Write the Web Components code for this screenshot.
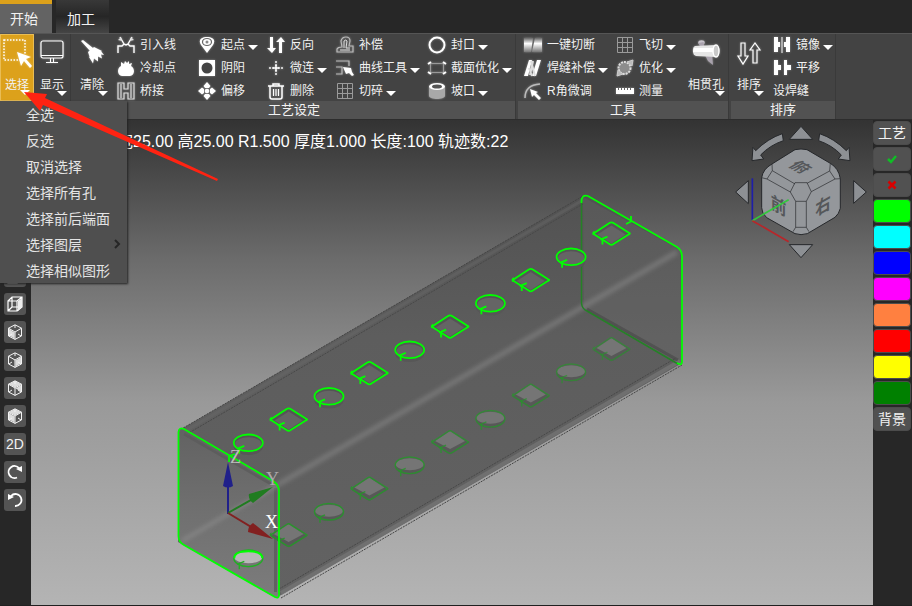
<!DOCTYPE html>
<html lang="zh-CN">
<head>
<meta charset="utf-8">
<title>三维管材切割</title>
<style>
html,body{margin:0;height:100%;background:#272727}
body{font-family:"Liberation Sans","Noto Sans CJK SC",sans-serif;color:#f2f2f2;overflow:hidden}
</style>
</head>
<body>
<cad-app></cad-app>
<script>
const ICONS = {
  select:[30,`<rect x="2" y="2" width="21" height="20" fill="none" stroke="#fff" stroke-width="1.5" stroke-dasharray="1.500 1.500"/><path d="M15 14l14 5-5 2 6 7-2 2-6-7-3 5z" fill="#fff"/>`],
  screen:[30,`<rect x="4" y="3" width="22" height="17" rx="2" fill="#4d4d4d" stroke="#fff" stroke-width="1.2"/><path d="M4 17.500h22M13.500 20v4M16.500 20v4M9 24.500h12" stroke="#fff" fill="none"/>`],
  broom:[30,`<path d="M4 3l2-1 10 8-3 3zM11 14l6-5 8 4-12 7zM12 19l11-7 4 5-3-.5 1 4-4-2v5l-4-3-1 5z" fill="#fff"/>`],
  pipe:[30,`<ellipse cx="10.500" cy="4.500" rx="3.200" ry="2.200" fill="#c9c4cc"/><path d="M7.500 5l3 7 3-2-1-6zM14 17l3 6 5 4-1-11z" fill="#a9a2ad"/><path d="M4 8l21-1v12l-20-1c-4-1-4-9-1-10z" fill="#e6e6e6"/><path d="M3 10h20v4H2z" fill="#fff"/><ellipse cx="25" cy="13" rx="3" ry="6" fill="#c8c8c8" stroke="#fff" stroke-width="1.500"/>`],
  sort:[30,`<path d="M7 5h4v13h3l-5 8-5-8h3zM19 25h4V12h3l-5-7-5 7h3z" fill="none" stroke="#fff" stroke-width="1.200"/>`],
  lead:[18,`<path d="M1 17V10h4l2-2 2 1 2-1 2 2h4v7M3 1l4 7M15 1l-4 7" fill="none" stroke="#fff" stroke-width="1.400"/><path d="M1 4l4 1-1-4zM17 4l-4 1 1-4z" fill="#ddd"/>`],
  cool:[18,`<path d="M4 3l3 2 1-3 2 2 2-2 0 3 3-1-1 3c5 3 3 10-1 10H5C1 17-1 10 4 7z" fill="#fff"/>`],
  bridge:[18,`<path d="M1 1h6v6h4V1h6v16h-6v-6H7v6H1zM4 2v14M14 2v14" fill="none" stroke="#ddd" stroke-width="1.200"/>`],
  pin:[18,`<path d="M9 17L3 9C0 4 3 1 9 1s9 3 6 8z" fill="#fff"/><ellipse cx="9" cy="6" rx="4.500" ry="3.500" fill="none" stroke="#666" stroke-width="1.200"/><circle cx="9" cy="6" r="1.500" fill="#888"/>`],
  yin:[18,`<path d="M1 1h16v16H1z" fill="#fff"/><circle cx="9" cy="9" r="5.500" fill="#444"/>`],
  move:[18,`<circle cx="9" cy="9" r="2.300" fill="#fff"/><path d="M9 0l3.500 4-1.500 2H7L5.500 4zM9 18l3.500-4-1.500-2H7l-1.500 2zM0 9l4-3.500L6 7v4l-2 1.500zM18 9l-4-3.500L12 7v4l2 1.500z" fill="#fff"/>`],
  reverse:[18,`<path d="M3 1h3v11h3l-4 5-5-5h3zM12 17h3V6h3l-4-5-5 5h3z" fill="#fff"/>`],
  micro:[18,`<path d="M9 2v14M2 9h14" stroke="#ccc" stroke-width="2" stroke-dasharray="2 1"/><path d="M9 6v6M6 9h6" stroke="#fff" stroke-width="1.500"/>`],
  trash:[18,`<path d="M1 4h16M6 4V2h6v2M3 4v11q0 2 2 2h8q2 0 2-2V4" fill="none" stroke="#fff" stroke-width="1.500"/><path d="M6.500 7v7M9 7v7M11.500 7v7" stroke="#fff" stroke-width="1.200"/>`],
  comp:[18,`<path d="M1 16V13q1-2 5-2L5 5q1-4 5-4t4 4l-1 5h4v6z" fill="none" stroke="#bbb" stroke-width="1.200"/><path d="M4 14h10M8 12V5q2-2 3 0l-1 7h4" fill="none" stroke="#ddd" stroke-width="1"/>`],
  curve:[18,`<path d="M0 2h13v5M0 8h6v7H0" fill="none" stroke="#bbb" stroke-width="1.200"/><path d="M7 8l8 1 1 4 2 3-2 1-3-3-3 1z" fill="#fff"/>`],
  grid:[18,`<path d="M1.500 1.500h15v15h-15zM6.500 1v16M11.500 1v16M1 6.500h16M1 11.500h16" fill="none" stroke="#9a9a9a"/>`],
  cap:[18,`<circle cx="9" cy="9" r="7.500" fill="none" stroke="#fff" stroke-width="2"/>`],
  cross:[20,`<path d="M2 5.500h16M2 14.500h16M3.500 5v10M16.500 5v10" stroke="#999" fill="none"/><path d="M1 6l3-2M1 14l3 2M16 4l3 2M16 16l3-2" stroke="#fff" fill="none" stroke-width="2"/>`],
  groove:[18,`<path d="M1 4h16v10c-1 4-15 4-16 0z" fill="#a8a8a8"/><ellipse cx="9" cy="4.500" rx="8" ry="3.500" fill="#fff"/><ellipse cx="9" cy="4.500" rx="5" ry="2" fill="#555"/>`],
  cut:[18,`<path d="M0 2h9L7 16H0z" fill="url(#s)"/><path d="M11 2h7v14H8z" fill="url(#s)"/><defs><linearGradient id="s" x2="0" y2="1"><stop stop-color="#666"/><stop offset=".4" stop-color="#fff"/><stop offset="1" stop-color="#777"/></linearGradient></defs>`],
  weld:[18,`<path d="M5 1h3L4 17H0zM13 1h4L12 17H8z" fill="#fff"/><path d="M7 2l4 15M5 9l3 8M9 2l-3 14" stroke="#ddd" stroke-width="2"/>`],
  corner:[18,`<path d="M1 16Q1 3 16 2" fill="none" stroke="#bbb" stroke-width="1.500"/><path d="M6 7l8 3-2 1 5 5-2 2-5-5-2 2z" fill="#fff"/>`],
  opt:[18,`<circle cx="8.500" cy="9" r="6" fill="#8c8c8c" stroke="#ddd" stroke-width="2" stroke-dasharray="2 1"/><path d="M17 1l-1 6-5-4zM1 17l1-6 5 4z" fill="#bbb" stroke="#ccc"/>`],
  ruler:[20,`<path d="M1 7h18v6H1z" fill="#fff"/><path d="M3.500 7v2M6.500 7v2M9.500 7v2M12.500 7v2M15.500 7v2" stroke="#666"/>`],
  mirror:[18,`<path d="M1 1h4v5h2v5H5v5H1zM13 1h4v15h-4v-5h-2V6h2z" fill="#fff"/><path d="M9 1v16" stroke="#ccc" stroke-width="1.400"/>`],
  pan:[18,`<path d="M1 1h4v5h3v5H5v5H1zM11 1h3v5h4v5h-4v5h-3z" fill="#fff"/>`],
  box:[16,`<path d="M1 5h9v10H1zM1 5l4-4h10v10l-5 4M10 5l5-4M5 1v10h10M5 11l-4 4" fill="none" stroke="#fff" stroke-width="1.200"/><path d="M11 5l4-3v9l-4 4z" fill="#eee"/>`],
  cubeA:[16,`<path d="M2 5l5.500 3.500v6L2 11.500z" fill="#ddd"/>`],
  cubeB:[16,`<path d="M14 5L8.500 8.500v6l5.500-3z" fill="#ddd"/>`],
  cubeC:[16,`<path d="M8 1l6 3.200L8 7.500 2 4.200z" fill="#ddd"/><path d="M8.500 8.500L14 5v6.500z" fill="#ddd"/>`],
  cubeD:[16,`<path d="M8 1l6 3.200L8 7.500 2 4.200zM2 5l5.500 3.500v6L2 11.500z" fill="#ddd"/>`],
  redo:[16,`<path d="M10 13.500A6 6 0 1 1 12 4" fill="none" stroke="#fff" stroke-width="1.800"/><path d="M9 5l6-3v6z" fill="#fff"/>`],
  undo:[16,`<path d="M4 4a6 6 0 1 1 4 10" fill="none" stroke="#fff" stroke-width="1.800"/><path d="M7 5L1 2v6z" fill="#fff"/>`],
  yes:[10,`<path d="M1 5l3 3 5-6" fill="none" stroke="#0fbe25" stroke-width="2.500"/>`],
  no:[10,`<path d="M1.500 1.500l7 7M8.500 1.500l-7 7" stroke="#d80000" stroke-width="2.500"/>`],
  more:[10,`<path d="M3 0l4 4-4 4" fill="none" stroke="#262626" stroke-width="2"/>`]
};
const WIRE = `<path d="M8 .8L14.500 4.200v7.800L8 15.400 1.500 12V4.200zM1.500 4.200L8 8l6.500-3.800M8 8v7.400M2 12l3-2M14 12l-3-2M8 1v3" fill="none" stroke="#f4f4f4" stroke-width="1"/>`;

const define = (name, render) => customElements.define(name, class extends HTMLElement {
  constructor(){ super(); this.attachShadow({mode:'open'}); }
  connectedCallback(){ this.shadowRoot.innerHTML = render(this); }
});
const RESET = `button{all:unset;box-sizing:border-box;cursor:default}button:focus-visible{outline:1px solid #ddd}`;

define('cad-icon', el => {
  const n = el.getAttribute('name'), [s, art] = ICONS[n];
  return `<style>:host{display:block;flex:none}svg{display:block;overflow:visible}.glow{filter:drop-shadow(0 0 1px #fff6)}</style>
  <svg class="${/^(more|yes|no|cube.|box|grid|redo|undo)$/.test(n)?'':'glow'}" width="${s}" height="${s}" viewBox="0 0 ${s} ${s}" aria-hidden="true">${art}${n.startsWith('cube')?WIRE:''}</svg>`;
});

define('cad-tab', el => `<style>${RESET}
  :host{display:block}
  button{height:33px;padding:4px 14px 0 11px;font-size:14px;line-height:26px;background:linear-gradient(#383838,#262626 50%,#454545)}
  :host([active]) button{padding:0 14px 0 10px;background:#636363;border-top:4px solid #dca11b}
  </style><button role="tab" aria-selected="${el.hasAttribute('active')}"><slot></slot></button>`);

define('tool-button', el => `<style>${RESET}
  :host{display:block}
  button{display:flex;align-items:center;gap:5px;height:23px;padding-bottom:2px;font-size:12px;line-height:18px;white-space:nowrap}
  .t{display:flex;align-items:center;gap:3px}
  .i{width:18px;display:flex;justify-content:center}
  i{width:0;height:0;border:5px solid transparent;border-top-color:#fff;border-bottom:0;margin-top:6px}
  </style><button>${el.hasAttribute('icon')?`<span class="i"><cad-icon name="${el.getAttribute('icon')}"></cad-icon></span>`:''}<span class="t"><slot></slot>${el.hasAttribute('menu')?'<i></i>':''}</span></button>`);

define('big-button', el => `<style>${RESET}
  :host{display:block;width:38px}
  button{position:relative;display:flex;flex-direction:column;align-items:center;width:100%;height:67px;padding-top:4px;gap:8px;font-size:12px;line-height:18px;white-space:nowrap}
  :host([active]) button{background:#dca11b;border:1px solid #e9bd55;padding-top:3px}
  i{position:absolute;right:3px;bottom:5px;border:5px solid transparent;border-top-color:#fff;border-bottom:0}
  </style><button><cad-icon name="${el.getAttribute('icon')}"></cad-icon><span><slot></slot></span><i></i></button>`);

define('ribbon-group', el => `<style>
  :host{display:flex;flex-direction:column}
  .b{display:flex;height:67px;background:#434343}
  .l{height:18px;background:#525252;font-size:13px;line-height:18px;text-align:center}
  </style><div class="b"><slot></slot></div><div class="l">${el.getAttribute('label')||''}</div>`);

define('tool-column', el => `<style>:host{display:block;box-sizing:border-box;flex:none;width:${el.getAttribute('w')}px}</style><slot></slot>`);

define('cad-ribbon', () => `<style>
  :host{display:flex;gap:2px;height:87px;box-sizing:border-box;background:#434343;border-top:1px solid #555;border-bottom:1px solid #2d2d2d}
  ribbon-group{border-right:1px solid #3a3a3a}
  .a{padding-left:6px}.n{width:34px}.m{width:36px}.p{width:38px}
  </style>
  <ribbon-group><big-button class="n" icon="select" active>选择</big-button><big-button class="m" icon="screen">显示</big-button></ribbon-group>
  <ribbon-group label="工艺设定"><big-button icon="broom">清除</big-button>
   <tool-column w="81" class="a"><tool-button icon="lead">引入线</tool-button><tool-button icon="cool">冷却点</tool-button><tool-button icon="bridge">桥接</tool-button></tool-column>
   <tool-column w="69" class="a"><tool-button icon="pin" menu>起点</tool-button><tool-button icon="yin">阴阳</tool-button><tool-button icon="move">偏移</tool-button></tool-column>
   <tool-column w="69" class="a"><tool-button icon="reverse">反向</tool-button><tool-button icon="micro" menu>微连</tool-button><tool-button icon="trash">删除</tool-button></tool-column>
   <tool-column w="92" class="a"><tool-button icon="comp">补偿</tool-button><tool-button icon="curve" menu>曲线工具</tool-button><tool-button icon="grid" menu>切碎</tool-button></tool-column>
   <tool-column w="93" class="a"><tool-button icon="cap" menu>封口</tool-button><tool-button icon="cross" menu>截面优化</tool-button><tool-button icon="groove" menu>坡口</tool-button></tool-column>
  </ribbon-group>
  <ribbon-group label="工具">
   <tool-column w="98" class="a"><tool-button icon="cut">一键切断</tool-button><tool-button icon="weld" menu>焊缝补偿</tool-button><tool-button icon="corner">R角微调</tool-button></tool-column>
   <tool-column w="68"><tool-button icon="grid" menu>飞切</tool-button><tool-button icon="opt" menu>优化</tool-button><tool-button icon="ruler">测量</tool-button></tool-column>
   <big-button style="width:44px" icon="pipe">相贯孔</big-button>
  </ribbon-group>
  <ribbon-group label="排序"><big-button class="m" icon="sort">排序</big-button>
   <tool-column w="68" class="a"><tool-button icon="mirror" menu>镜像</tool-button><tool-button icon="pan">平移</tool-button><tool-button>设焊缝</tool-button></tool-column>
  </ribbon-group>`);

define('view-bar', () => `<style>${RESET}
  :host{display:flex;flex-direction:column;align-items:center;gap:6px;width:31px;padding:5px 1px 0 0;box-sizing:border-box;background:#272727}
  button{display:flex;align-items:center;justify-content:center;width:22px;height:22px;border-radius:3px;background:#545454;font-size:14px;line-height:22px}
  </style>` + ['box','box','box','box','box','box','box','cubeA','cubeB','cubeC','cubeD','','redo','undo']
  .map((n,i)=>`<button aria-label="${n?'视图 '+(i+1):'2D'}">${n?`<cad-icon name="${n}"></cad-icon>`:'2D'}</button>`).join(''));

define('layer-bar', () => `<style>${RESET}
  :host{display:flex;flex-direction:column;gap:2px;width:39px;padding:1px 1px 0 0;box-sizing:border-box;background:#272727}
  button{display:flex;align-items:center;justify-content:center;height:24px;border-radius:4px;border:1px solid #4c4c4c;background:#515151;font-size:14px;line-height:22px}
  </style><button>工艺</button><button aria-label="确认"><cad-icon name="yes"></cad-icon></button><button aria-label="取消"><cad-icon name="no"></cad-icon></button>`
  + ['#0f0','#0ff','#00f','#f0f','#ff8040','#f00','#ff0','#008000'].map((c,i)=>`<button aria-label="图层 ${i+1}" style="background:${c}"></button>`).join('') + `<button>背景</button>`);

define('select-menu', () => `<style>${RESET}
  :host{display:block;width:127px;background:#4f4f4f;box-shadow:1px 1px 2px #222}
  button{display:flex;align-items:center;justify-content:space-between;width:100%;height:26px;padding:1px 5px 0 26px;font-size:14px;line-height:20px;color:#e4e4e4}
  </style><div role="menu">` + ['全选','反选','取消选择','选择所有孔','选择前后端面','选择图层','选择相似图形']
  .map(t=>`<button role="menuitem">${t}${t==='选择图层'?'<cad-icon name="more"></cad-icon>':''}</button>`).join('') + `</div>`);

define('pipe-scene', () => {
  const tick = `<path d="M-9 11V5M-11 6L-4 3"/>`;
  const oval = `<ellipse rx="14.500" ry="8.300"/>`, dia = `<path d="M-18 0L-2-10.500Q0-12 2-10.500L17-1Q20 0 17 1L2 10.500Q0 12-2 10.500L-17 1Q-19 0-18-1z"/>`;
  let top = '', bot = '';
  for (let i=0;i<10;i++){
    const x=248.3+40.35*i, y=442.8-23.25*i, d=i%2, s=d?dia:oval;
    const inner = d ? `<path d="M-14 1L0-8 14 1 0 10z"/>` : `<ellipse cy="1" rx="13" ry="6.500"/>`;
    top += `<g transform="translate(${x} ${y})"><g fill="#575757" stroke="none" transform="translate(0 4)">${d?'':s}</g><g fill="#555" stroke="none">${s}</g><g fill="#656565">${inner}</g><g fill="none" stroke="#0f0" stroke-width="1.800">${s}${tick}</g></g>`;
    bot += `<g transform="translate(${x} ${y+115.5})"><g fill="${i?'#585858':'#757575'}" stroke="none"><g transform="translate(0 1)">${s}</g></g><g transform="translate(0 -1)" fill="${i?'#757575':'#b8b8b8'}">${d?`<path d="M-15 0L0-10 15 0 0 8z"/>`:`<ellipse rx="14" ry="6"/>`}</g><g fill="none" stroke="${i?'#26962a':'#20b024'}" stroke-opacity="${1-i*.04}" stroke-width="1.400">${s}${tick}</g>${i?'':'<path d="M-14 0Q-14-7 0-7T14 0" fill="none" stroke="#0f0" stroke-width="2"/>'}</g>`;
  }
  return `<style>:host{display:block;position:relative;overflow:hidden;background:linear-gradient(#333 0%,#6c6c6c 29%,#999 58%,#b4b4b4 100%)}
  svg{position:absolute;inset:0;width:100%;height:100%}
  p{position:relative;margin:0;padding:11px 0 0 86px;font-size:16px;line-height:22px;color:#fff;white-space:nowrap}</style>
  <svg viewBox="31 120 842 485" preserveAspectRatio="xMidYMid slice" role="img" aria-label="方管模型">
  <defs><linearGradient id="b" x2="0" y2="1"><stop stop-color="#525252"/><stop offset=".35" stop-color="#5d5d5d"/><stop offset="1" stop-color="#626262"/></linearGradient>
  <linearGradient id="f" x2="0" y2="1"><stop stop-color="#626262"/><stop offset=".5" stop-color="#707070"/><stop offset="1" stop-color="#7c7c7c"/></linearGradient>
  <filter id="soft" x="-10%" y="-10%" width="120%" height="120%"><feGaussianBlur stdDeviation="2"/></filter></defs>
  <path d="M178 431L581 197 588 196 677 247 682 254V363L276 598 178 542z" fill="url(#b)"/>
  <path d="M583 197L680 250 682 363 584 308z" fill="#888" opacity=".12"/>
  <path d="M178 431L583 196M281 598L682 365" stroke="#444" fill="none" stroke-dasharray="2 1"/>
  <path d="M281 593L680 361" stroke="#747474" stroke-width="4" opacity=".8"/>
  <path d="M180 434L583 200" stroke="#6a6a6a" stroke-width="3" opacity=".4"/>
  <path d="M187 434L583 204M279 589L676 358" stroke="#484848" stroke-dasharray="2 1"/>
  <path d="M178 432Q179 427 184 429L273 481Q279 485 279 491V595Q279 599 275 597L184 545Q178 542 178 536z" fill="url(#f)"/>
  <path d="M184 434L271 484M275.500 488V592" stroke="#5c5c5c" stroke-width="3" opacity=".8"/>
  <path d="M182 541L279 484" stroke="#8c8c8c" stroke-width="4" fill="none" filter="url(#soft)" opacity=".7"/>
  <path d="M279 484L677 252" stroke="#848484" stroke-width="5" fill="none" filter="url(#soft)" opacity=".65"/>
  <path d="M587 309L678 360" stroke="#484848" stroke-width="3" opacity=".6"/>
  <path d="M581.500 198V303Q582 309 587 311L678 364" fill="none" stroke="#248226" stroke-width="1.500"/>
  ${bot}${top}
  <g fill="none" stroke="#0f0" stroke-width="1.800"><path d="M178.500 432Q179 427 184 429L273 481Q279 485 279 491V595Q279 599 275 597L184 545Q178.500 542 178.500 536z"/><path d="M581.500 203Q581 194 588 196L677 247Q682 250 682 257V362Q682 366 677 363M626 224l6-3M631 216v6M229 456l6-2M229 456v6"/></g>
  <path d="M228 514V480" stroke="#20208a" stroke-width="2"/><path d="M228 462L233 486Q228 489 223 486z" fill="#20208a"/>
  <path d="M228 513L256 497" stroke="#207c20" stroke-width="2"/><path d="M273 487L249 494Q248 499 253 503z" fill="#207c20"/>
  <path d="M228 513L256 530" stroke="#822020" stroke-width="2"/><path d="M273 539L253 523Q248 526 248 532z" fill="#822020"/>
  <g font-family="Liberation Serif,serif" font-size="18"><text x="230" y="463" fill="#bbb">Z</text><text x="266" y="485" fill="#aaa">Y</text><text x="265" y="528" fill="#fff">X</text></g>
  <g transform="translate(720 115) scale(.3333)" fill="#8d9094" stroke="#25272a" stroke-width="3" stroke-linejoin="round">
   <path d="M208 73L243 34 278 73zM208 389H278L243 428zM47 231L85 197V266zM401 197L439 231 401 265zM187 56L190 77Q149 91 122 120L131 132 96 137 99 97 107 107Q143 71 187 56zM299 56L296 77Q337 91 364 120L355 132 390 137 387 97 379 107Q343 71 299 56z"/>
   <path d="M225 104Q243 100 261 104L331 145Q356 160 361 191V280Q357 297 345 307L262 356Q243 362 225 356L140 308Q125 295 125 278V188Q129 162 156 147z" fill="#94979b"/>
   <g stroke-width="2"><path d="M156 147L157 167 225 207M331 145L329 168 261 205M225 203H261L274 230 259 259H227L211 231zM157 167L141 192 211 231M329 168L345 192 274 230M125 188L141 192M361 191L345 192M227 259V337L219 350M259 259V337L267 350M227 337H259" fill="none"/></g>
   <g stroke="none" fill="#55575a" font-family="Noto Sans CJK SC,sans-serif" font-size="54" font-weight="700" text-anchor="middle"><text transform="matrix(.87 .5 0 1 176 292)">前</text><text transform="matrix(.87 -.5 0 1 309 292)">右</text><text transform="matrix(.8 .45 -.8 .45 225 165)">俯</text></g>
   <path d="M97 315V190" stroke="#1e1ea8" stroke-width="5"/><path d="M97 317L206 254" stroke="#32c83c" stroke-width="5"/><path d="M97 317L206 380" stroke="#b8262a" stroke-width="5"/>
  </g></svg><p>宽25.00 高25.00 R1.500 厚度1.000 长度:100 轨迹数:22</p>`;
});

define('cad-app', () => `<style>
  :host{display:flex;flex-direction:column;height:100vh;position:relative}
  nav{display:flex;gap:4px;height:33px}
  main{display:flex;flex:1;min-height:0;border-bottom:1px solid #202020}
  pipe-scene{flex:1}
  select-menu{position:absolute;left:0;top:101px}
  .arrow{position:absolute;left:0;top:0;pointer-events:none}
  </style>
  <nav role="tablist"><cad-tab active>开始</cad-tab><cad-tab>加工</cad-tab></nav>
  <cad-ribbon></cad-ribbon>
  <main><view-bar></view-bar><pipe-scene></pipe-scene><layer-bar></layer-bar></main>
  <select-menu></select-menu>
  <svg class="arrow" width="230" height="190" aria-hidden="true"><path d="M24 92L47 94 45 98 218 179 217 181 43 105 40 111z" fill="#ff2312"/></svg>`);
</script>
</body>
</html>
